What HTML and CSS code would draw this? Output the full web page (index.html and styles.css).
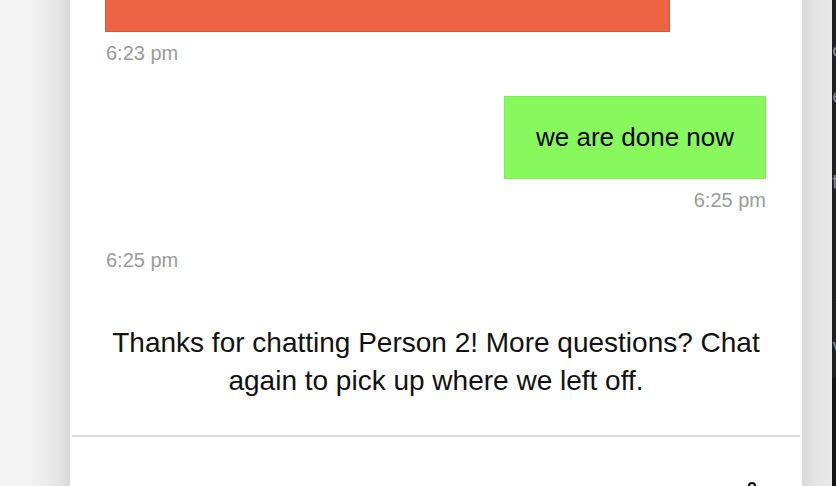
FILE: index.html
```html
<!DOCTYPE html>
<html lang="en">
<head>
<meta charset="utf-8">
<title>Chat</title>
<link rel="stylesheet" href="styles.css">
</head>
<body>
<div class="stage">
  <div class="backdrop-left"></div>
  <main class="panel">
    <div class="thread">
      <div class="msg msg-in">
        <div class="bubble bubble-orange"></div>
        <div class="time">6:23 pm</div>
      </div>
      <div class="msg msg-out">
        <div class="bubble bubble-green">we are done now</div>
        <div class="time">6:25 pm</div>
      </div>
      <div class="msg msg-in msg-empty">
        <div class="time">6:25 pm</div>
      </div>
      <p class="closing">Thanks for chatting Person 2! More questions? Chat again to pick up where we left off.</p>
    </div>
    <div class="divider"></div>
    <div class="footer">
      <svg class="foot-icon" width="12" height="12" viewBox="0 0 12 12" aria-hidden="true">
        <path d="M3 11 V7 a3 3 0 0 1 6 0 V11" fill="none" stroke="#111" stroke-width="2.2"/>
      </svg>
    </div>
  </main>
  <div class="backdrop-right"></div>
  <div class="side-strip">
    <span class="s1">T</span>
    <span class="s2">c</span>
    <span class="s3">e</span>
    <span class="s4">t</span>
    <div class="strip-sep strip-sep-a"></div>
    <span class="s5">v</span>
    <div class="strip-sep strip-sep-b"></div>
  </div>
</div>
</body>
</html>
```

FILE: styles.css
```css
* { box-sizing: border-box; }
html, body {
  margin: 0;
  padding: 0;
  width: 836px;
  height: 486px;
  overflow: hidden;
  font-family: "Liberation Sans", Arial, Helvetica, sans-serif;
}
.stage {
  display: flex;
  width: 836px;
  height: 486px;
}
.backdrop-left {
  width: 70px;
  flex: none;
  background: linear-gradient(to right, #f5f5f5 0%, #f2f2f2 45%, #e6e6e6 80%, #dadada 100%);
}
.panel {
  width: 732px;
  flex: none;
  background: #fff;
  display: flex;
  flex-direction: column;
  overflow: hidden;
}
.panel > * { flex: none; }
.thread {
  padding: 0 36px 0 36px;
  display: flex;
  flex-direction: column;
}
.msg {
  display: flex;
  flex-direction: column;
}
.msg-in { align-items: flex-start; }
.msg-out { align-items: flex-end; margin-top: 31px; }
.bubble-orange {
  margin-left: -1px;
  width: 565px;
  height: 32px;
  background: #ee6344;
  border: 1px solid #e5533a;
  border-top: none;
}
.bubble-green {
  width: 262px;
  height: 83px;
  background: #87f95d;
  border: 1px solid #7fee57;
  color: #000;
  font-size: 26px;
  line-height: 30px;
  display: flex;
  align-items: center;
  justify-content: center;
  padding-bottom: 2px;
}
.time {
  font-size: 20px;
  line-height: 23px;
  color: #9b9b9b;
  margin-top: 10px;
}
.msg-empty { margin-top: 27px; }
.closing {
  margin: 52px 0 0 0;
  text-align: center;
  font-size: 28px;
  line-height: 38px;
  color: #111;
}
.divider {
  margin: 35px 2px 0 2px;
  height: 2px;
  background: #dcdcdc;
}
.footer {
  display: flex;
  justify-content: flex-end;
  padding: 42px 44px 0 0;
}
.foot-icon { display: block; }
.backdrop-right {
  width: 30px;
  flex: none;
  background: linear-gradient(to right, #d9d9d9 0%, #e3e3e3 40%, #e8e8e8 100%);
}
.side-strip {
  width: 4px;
  flex: none;
  background: #1f2025;
  position: relative;
  overflow: hidden;
  color: #8a8b90;
  font-family: "DejaVu Sans", sans-serif;
  font-size: 20px;
}
.side-strip span {
  position: absolute;
  left: 0;
  line-height: 1;
}
.s1 { top: -14px; }
.s2 { top: 40px; }
.s3 { top: 86px; }
.s4 { top: 172px; }
.s5 { top: 336px; }
.strip-sep {
  position: absolute;
  left: 0;
  right: 0;
  height: 1px;
  background: #2c2d33;
}
.strip-sep-a { top: 302px; }
.strip-sep-b { top: 378px; background: #141418; height: 108px; }
```
